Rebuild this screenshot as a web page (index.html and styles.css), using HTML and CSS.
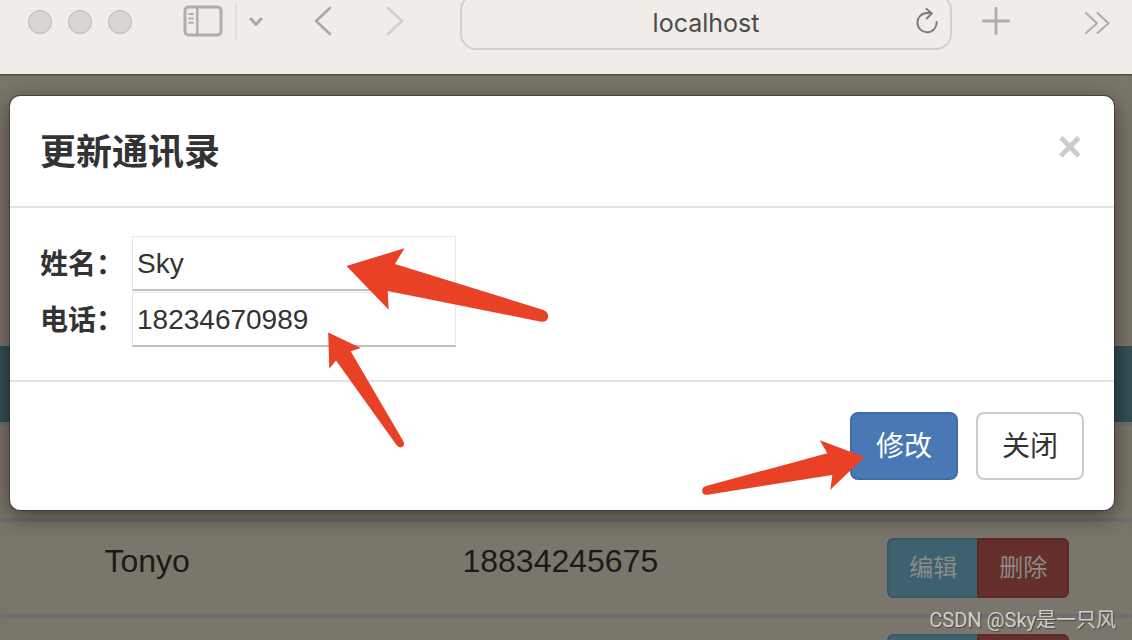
FILE: index.html
```html
<!DOCTYPE html>
<html lang="zh-CN">
<head>
<meta charset="utf-8">
<meta name="viewport" content="width=device-width, initial-scale=1">
<title>通讯录</title>
<link rel="stylesheet" href="styles.css">
</head>
<body>
<header class="toolbar">
  <div class="lights"><span class="light"></span><span class="light"></span><span class="light"></span></div>
  <div class="sidebar-group">
    <button class="icon-button" type="button" aria-label="Sidebar"><svg width="40" height="34" viewBox="0 0 40 34" fill="none" stroke="#b0ada8" stroke-width="3"><rect x="2" y="2" width="36" height="28" rx="3.5"/><path d="M14.3 2v28" stroke-width="2.4"/><path d="M6 9h4M6 13.4h4M6 17.8h4" stroke-width="2" stroke-linecap="round"/></svg></button>
    <span class="divider"></span>
    <button class="icon-button" type="button" aria-label="Tab groups"><svg width="14" height="10" viewBox="0 0 14 10" fill="none" stroke="#aaa7a2" stroke-width="3" stroke-linecap="round" stroke-linejoin="round"><path d="M2 2l5 5.5L12 2"/></svg></button>
  </div>
  <div class="history">
    <button class="icon-button" type="button" aria-label="Back"><svg width="18" height="32" viewBox="0 0 18 32" fill="none" stroke="#aba8a3" stroke-width="2.6" stroke-linecap="round" stroke-linejoin="round"><path d="M16 2L2 15l14 13"/></svg></button>
    <button class="icon-button" type="button" aria-label="Forward"><svg width="18" height="32" viewBox="0 0 18 32" fill="none" stroke="#d3d0cb" stroke-width="2.6" stroke-linecap="round" stroke-linejoin="round"><path d="M2 2l14 13L2 28"/></svg></button>
  </div>
  <div class="address">
    <input class="address-input" type="text" value="localhost" aria-label="Address">
    <button class="icon-button" type="button" aria-label="Reload"><svg width="24" height="28" viewBox="-1 2 24 28" fill="none" stroke="#7d7a77" stroke-width="1.9" stroke-linecap="round" stroke-linejoin="round"><path d="M21.6 16A9.6 9.6 0 1 1 12 7h4.5M11.5 2.9L16.8 7.5l-5 5"/></svg></button>
  </div>
  <button class="icon-button" type="button" aria-label="New tab"><svg width="28" height="30" viewBox="0 0 28 30" fill="none" stroke="#b0ada8" stroke-width="2.8" stroke-linecap="round"><path d="M14 1.5v25M1.5 14h25"/></svg></button>
  <button class="icon-button more" type="button" aria-label="More"><svg width="26" height="24" viewBox="0 0 26 24" fill="none" stroke="#b0ada8" stroke-width="2" stroke-linecap="round" stroke-linejoin="round"><path d="M2 3l11 10.3L2 23M13.5 3l11 10.3L13.5 23"/></svg></button>
</header>

<main class="stage">
  <table class="contacts">
    <thead><tr><th></th><th></th><th></th></tr></thead>
    <tbody>
      <tr><td></td><td></td><td></td></tr>
      <tr><td>Tonyo</td><td>18834245675</td><td><div class="row-actions"><button class="row-button edit" type="button">编辑</button><button class="row-button remove" type="button">删除</button></div></td></tr>
      <tr><td></td><td></td><td><div class="row-actions"><button class="row-button edit" type="button" aria-label="编辑"></button><button class="row-button remove" type="button" aria-label="删除"></button></div></td></tr>
    </tbody>
  </table>

  <section class="dialog" role="dialog" aria-labelledby="dialog-title">
    <div class="dialog-header">
      <h1 class="dialog-title" id="dialog-title">更新通讯录</h1>
      <button class="close" type="button" aria-label="Close">×</button>
    </div>
    <form class="dialog-body">
      <div class="field"><label for="name">姓名：</label><input id="name" type="text" value="Sky"></div>
      <div class="field"><label for="phone">电话：</label><input id="phone" type="text" value="18234670989"></div>
    </form>
    <div class="dialog-footer">
      <button class="button primary" type="button">修改</button>
      <button class="button" type="button">关闭</button>
    </div>
  </section>
</main>

<svg class="arrow arrow-name" width="204" height="78" viewBox="346 246 204 78" aria-hidden="true"><path d="M346.5 266L404.5 248.2L395 264L543.5 310Q549 312.5 548 317.5Q547 322.5 541 321.7L387.7 291L388.7 309.8Z"/></svg>
<svg class="arrow arrow-phone" width="78" height="118" viewBox="328 332 78 118" aria-hidden="true"><path d="M328.2 332.5L360.8 348L350.7 351.3L403.5 441.5Q405 445.5 402 447Q399 448.5 396.5 445L336 360.5L329.3 368.8Z"/></svg>
<svg class="arrow arrow-submit" width="164" height="58" viewBox="702 438 164 58" aria-hidden="true"><path d="M864.5 457L819.8 440.3L827.3 453.3L706 486Q702 487 702.2 491Q702.5 495.5 707.5 494.7L832.3 475L830.3 489.8Z"/></svg>
<div class="watermark">CSDN @Sky是一只风</div>
</body>
</html>
```

FILE: styles.css
```css
* {
  box-sizing: border-box;
}

body {
  margin: 0;
  height: 100vh;
  display: flex;
  flex-direction: column;
  position: relative;
  overflow: hidden;
  background: #7b766b;
  color: #333;
  font-family: "Liberation Sans", "Noto Sans CJK SC", sans-serif;
}

button,
input {
  font-family: inherit;
}

.toolbar {
  flex: none;
  display: flex;
  align-items: center;
  height: 75px;
  padding: 0 22px 30px 28px;
  background: #f0ede8;
  border-bottom: 1px solid #514b42;
}

.icon-button {
  display: flex;
  padding: 0;
  border: 0;
  background: none;
}

.lights {
  display: flex;
  gap: 16px;
}

.light {
  width: 24px;
  height: 24px;
  border: 1px solid #bbb8b3;
  border-radius: 50%;
  background: #d8d5d0;
}

.sidebar-group {
  display: flex;
  align-items: center;
  gap: 12px;
  margin-left: 51px;
}

.divider {
  width: 2px;
  height: 36px;
  background: #e2dfda;
}

.history {
  display: flex;
  gap: 54px;
  margin: 0 56px 0 51px;
}

.address {
  flex: 1;
  display: grid;
  grid-template-columns: 1fr 36px;
  align-items: center;
  height: 56px;
  margin: -6px 30px -6px 0;
  padding-left: 36px;
  border: 2px solid #d3d0ca;
  border-radius: 16px;
}

.address-input {
  width: 100%;
  padding: 2px 0 0;
  border: 0;
  background: none;
  color: #4d4b49;
  font-family: Inter, sans-serif;
  font-size: 25px;
  text-align: center;
}

.more {
  margin-left: 74px;
}

.stage {
  flex: 1;
  position: relative;
  min-height: 0;
  padding-top: 271px;
  overflow: hidden;
  box-shadow: inset 0 1px 1px #696459;
}

.contacts {
  width: 100%;
  table-layout: fixed;
  border-collapse: separate;
  border-spacing: 0;
  color: #1c1a18;
  font-size: 32px;
  line-height: 46px;
  text-align: center;
}

.contacts th {
  height: 76px;
  padding: 0;
  background: #344f52;
}

.contacts th:first-child {
  width: 26%;
}

.contacts th:last-child {
  width: 27%;
}

.contacts td {
  height: 96px;
  padding: 16px 0;
  border-top: 4px solid #706e70;
  vertical-align: top;
}

.row-actions {
  display: flex;
  justify-content: center;
  padding-right: 2px;
}

.row-button {
  width: 92px;
  height: 60px;
  padding: 0;
  border: 2px solid;
  color: #8d8b86;
  font-size: 24px;
  line-height: 36px;
}

.edit {
  margin-right: -2px;
  border-color: #38596a;
  border-radius: 6px 0 0 6px;
  background: #3e6170;
}

.remove {
  border-color: #5d2927;
  border-radius: 0 6px 6px 0;
  background: #652f2c;
}

.dialog {
  position: absolute;
  top: 21px;
  left: 10px;
  right: 18px;
  border-radius: 10px;
  background: #fff;
  box-shadow: 0 0 0 1px rgba(40, 32, 25, 0.5), 0 6px 24px rgba(0, 0, 0, 0.5);
}

.dialog-header {
  display: flex;
  align-items: center;
  justify-content: space-between;
  height: 112px;
  padding: 0 32px 0 30px;
  border-bottom: 2px solid #e3e3e3;
}

.dialog-title {
  margin: 0;
  padding-top: 3px;
  font-size: 36px;
  font-weight: 700;
  line-height: 40px;
}

.close {
  padding: 0 0 8px;
  border: 0;
  background: none;
  color: #ccc;
  font-size: 42px;
  font-weight: 700;
  line-height: 42px;
}

.dialog-body {
  padding: 28px 30px 32px;
}

.field {
  display: flex;
  align-items: flex-start;
  gap: 8px;
  height: 56px;
}

.field label {
  padding-top: 9px;
  font-size: 28px;
  font-weight: 700;
  line-height: 40px;
}

.field input {
  width: 324px;
  height: 55px;
  padding: 2px 4px 0;
  border: 1px solid #e6e6e6;
  border-bottom: 2px solid #c0c0c0;
  background: #fff;
  color: #333;
  font-size: 28px;
}

.dialog-footer {
  display: flex;
  justify-content: flex-end;
  gap: 18px;
  padding: 30px;
  border-top: 2px solid #e3e3e3;
}

.button {
  padding: 13px 24px 11px;
  border: 2px solid #ccc;
  border-radius: 8px;
  background: #fff;
  color: #333;
  font-size: 28px;
  line-height: 40px;
}

.primary {
  border-color: #426ca5;
  background: #4879b4;
  color: #fff;
}

.arrow {
  position: absolute;
  fill: #e94126;
  pointer-events: none;
}

.arrow-name {
  top: 246px;
  left: 346px;
}

.arrow-phone {
  top: 332px;
  left: 328px;
}

.arrow-submit {
  top: 438px;
  right: 266px;
}

.watermark {
  position: absolute;
  right: 16px;
  bottom: 6px;
  color: #d0cfcc;
  font-family: Roboto, "Noto Sans CJK SC", sans-serif;
  font-size: 20px;
  line-height: 28px;
  text-shadow: 1px 1px 1px #444;
}
```
